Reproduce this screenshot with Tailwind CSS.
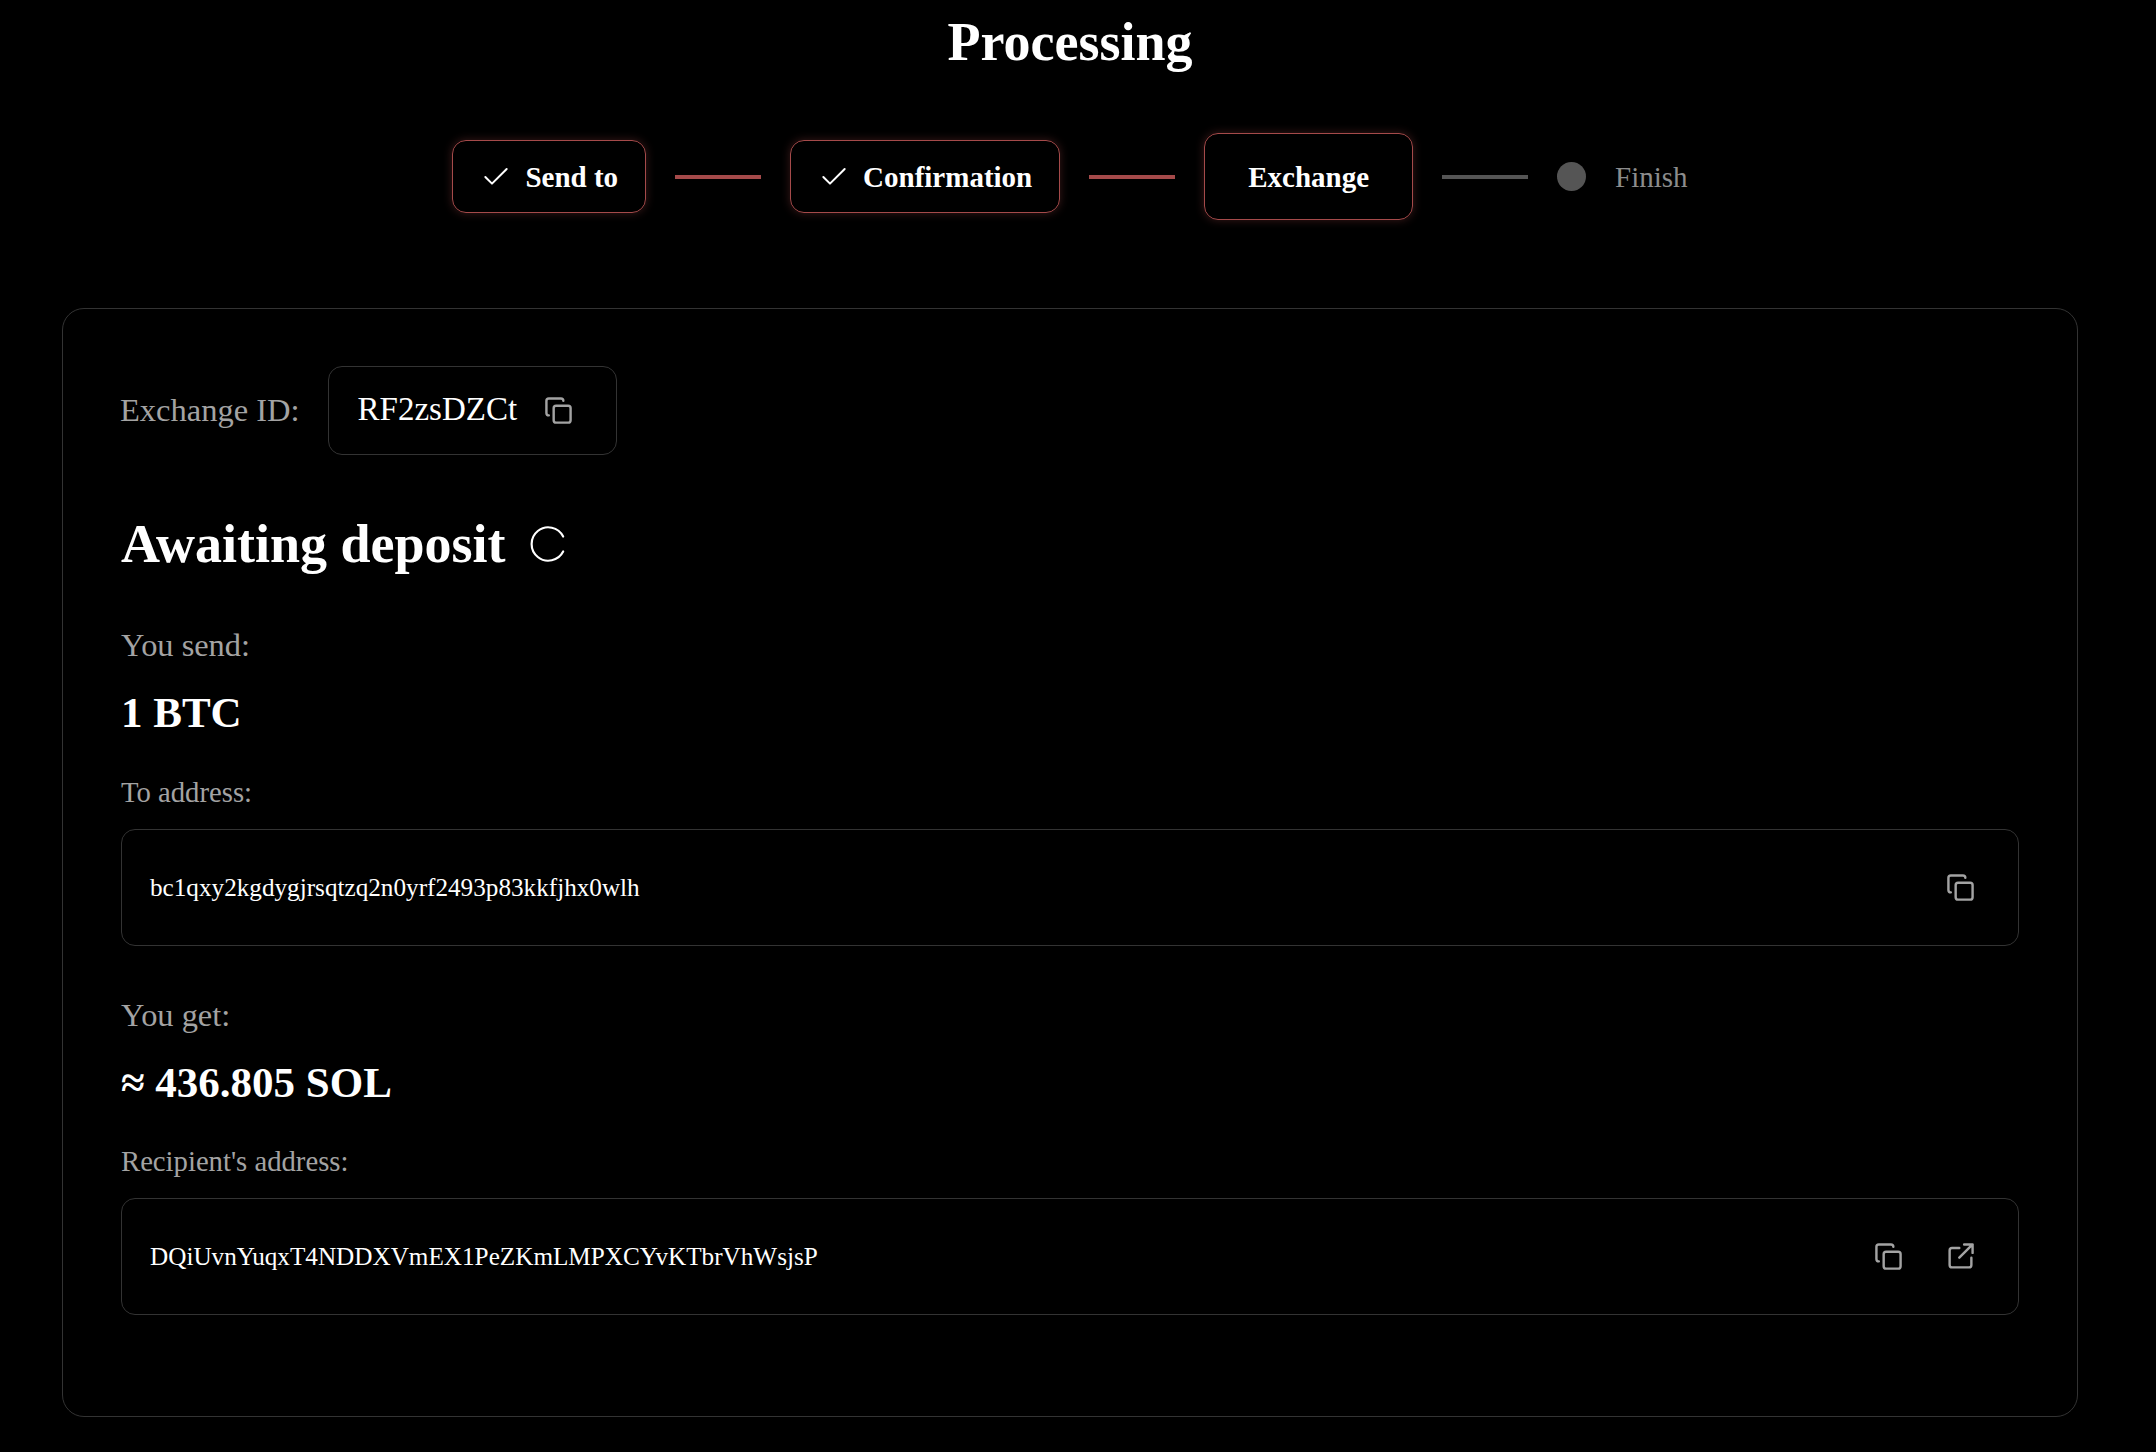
<!DOCTYPE html>
<html lang="en">
<head>
    <meta charset="UTF-8">
    <title>Processing</title>
    <script src="https://cdn.jsdelivr.net/npm/@tailwindcss/browser@4"></script>
</head>
<body class="bg-black text-white font-['Liberation_Serif',serif] h-[1452px] overflow-hidden">
    <div class="w-[2140px]">
    <h1 class="text-center text-[54px] leading-[60px] font-bold pt-[12px]">Processing</h1>

    <!-- Steps -->
    <div class="flex items-center justify-center mt-[61px] h-[87px] text-[29px] leading-[34px]">
        <div class="flex items-center gap-[13px] h-[73px] pl-[27px] pr-[27px] border border-[#a54a4a] rounded-[14px] font-bold shadow-[0_0_10px_rgba(165,74,74,0.35)]">
            <svg class="w-[32px] h-[32px]" viewBox="0 0 24 24" fill="none" stroke="currentColor" stroke-width="1.5" stroke-linecap="round" stroke-linejoin="round"><path d="M20 6 9 17l-5-5"/></svg>
            <span>Send to</span>
        </div>
        <div class="w-[86px] h-[4px] mx-[29px] bg-[#a54a4a]"></div>
        <div class="flex items-center gap-[13px] h-[73px] pl-[27px] pr-[27px] border border-[#a54a4a] rounded-[14px] font-bold shadow-[0_0_10px_rgba(165,74,74,0.35)]">
            <svg class="w-[32px] h-[32px]" viewBox="0 0 24 24" fill="none" stroke="currentColor" stroke-width="1.5" stroke-linecap="round" stroke-linejoin="round"><path d="M20 6 9 17l-5-5"/></svg>
            <span>Confirmation</span>
        </div>
        <div class="w-[86px] h-[4px] mx-[29px] bg-[#a54a4a]"></div>
        <div class="flex items-center h-[87px] px-[43px] border border-[#a54a4a] rounded-[14px] font-bold shadow-[0_0_10px_rgba(165,74,74,0.35)]">Exchange</div>
        <div class="w-[86px] h-[4px] mx-[29px] bg-[#555555]"></div>
        <div class="w-[29px] h-[29px] rounded-full bg-[#555555]"></div>
        <span class="ml-[29px] text-[#8c8c8c]">Finish</span>
    </div>

    <!-- Card -->
    <div class="mt-[88px] ml-[62px] w-[2016px] h-[1109px] border border-[#333333] rounded-[22px] px-[58px] pt-[57px]">
        <div class="flex items-center gap-[28px]">
            <span class="text-[32.5px] leading-[38px] text-[#a3a3a3] -mt-[2px] -ml-[1px]">Exchange ID:</span>
            <div class="flex items-center gap-[27px] w-[289px] h-[89px] pl-[29px] border border-[#333333] rounded-[14px] text-[33px]">
                <span class="-mt-[2px]">RF2zsDZCt</span>
                <svg class="w-[29px] h-[29px] text-[#a3a3a3]" viewBox="0 0 24 24" fill="none" stroke="currentColor" stroke-width="2" stroke-linecap="round" stroke-linejoin="round"><rect x="8" y="8" width="14" height="14" rx="2"/><path d="M4 16c-1.1 0-2-.9-2-2V4c0-1.1.9-2 2-2h10c1.1 0 2 .9 2 2"/></svg>
            </div>
        </div>

        <div class="flex items-center gap-[23px] mt-[58px]">
            <h2 class="text-[54px] leading-[62px] font-bold">Awaiting deposit</h2>
            <svg class="w-[40px] h-[40px] text-white" viewBox="0 0 24 24" fill="none" stroke="currentColor" stroke-width="1.3" stroke-linecap="round"><path d="M20.5 7.5A10 10 0 1 0 20.5 16.5"/></svg>
        </div>

        <div class="mt-[51px] text-[32.4px] leading-[38px] text-[#a3a3a3]">You send:</div>
        <div class="mt-[23px] text-[43px] leading-[52px] font-bold">1 BTC</div>
        <div class="mt-[36px] text-[28.7px] leading-[34px] text-[#a3a3a3]">To address:</div>
        <div class="flex items-center justify-between h-[117px] mt-[20px] pl-[28px] pr-[43px] border border-[#333333] rounded-[14px] text-[25.2px]">
            <span>bc1qxy2kgdygjrsqtzq2n0yrf2493p83kkfjhx0wlh</span>
            <svg class="w-[29px] h-[29px] text-[#a3a3a3]" viewBox="0 0 24 24" fill="none" stroke="currentColor" stroke-width="2" stroke-linecap="round" stroke-linejoin="round"><rect x="8" y="8" width="14" height="14" rx="2"/><path d="M4 16c-1.1 0-2-.9-2-2V4c0-1.1.9-2 2-2h10c1.1 0 2 .9 2 2"/></svg>
        </div>

        <div class="mt-[50px] text-[32.4px] leading-[38px] text-[#a3a3a3]">You get:</div>
        <div class="mt-[23px] text-[43px] leading-[52px] font-bold">≈ 436.805 SOL</div>
        <div class="mt-[35px] text-[28.7px] leading-[34px] text-[#a3a3a3]">Recipient's address:</div>
        <div class="flex items-center justify-between h-[117px] mt-[20px] pl-[28px] pr-[43px] border border-[#333333] rounded-[14px] text-[25.2px]">
            <span>DQiUvnYuqxT4NDDXVmEX1PeZKmLMPXCYvKTbrVhWsjsP</span>
            <div class="flex items-center gap-[43px] text-[#a3a3a3]">
                <svg class="w-[29px] h-[29px]" viewBox="0 0 24 24" fill="none" stroke="currentColor" stroke-width="2" stroke-linecap="round" stroke-linejoin="round"><rect x="8" y="8" width="14" height="14" rx="2"/><path d="M4 16c-1.1 0-2-.9-2-2V4c0-1.1.9-2 2-2h10c1.1 0 2 .9 2 2"/></svg>
                <svg class="w-[29px] h-[29px]" viewBox="0 0 24 24" fill="none" stroke="currentColor" stroke-width="2" stroke-linecap="round" stroke-linejoin="round"><path d="M21 13v6a2 2 0 0 1-2 2H5a2 2 0 0 1-2-2V7a2 2 0 0 1 2-2h6"/><path d="M22 2h-7M22 2v7M22 2 11 13"/></svg>
            </div>
        </div>
    </div>
    </div>
</body>
</html>
